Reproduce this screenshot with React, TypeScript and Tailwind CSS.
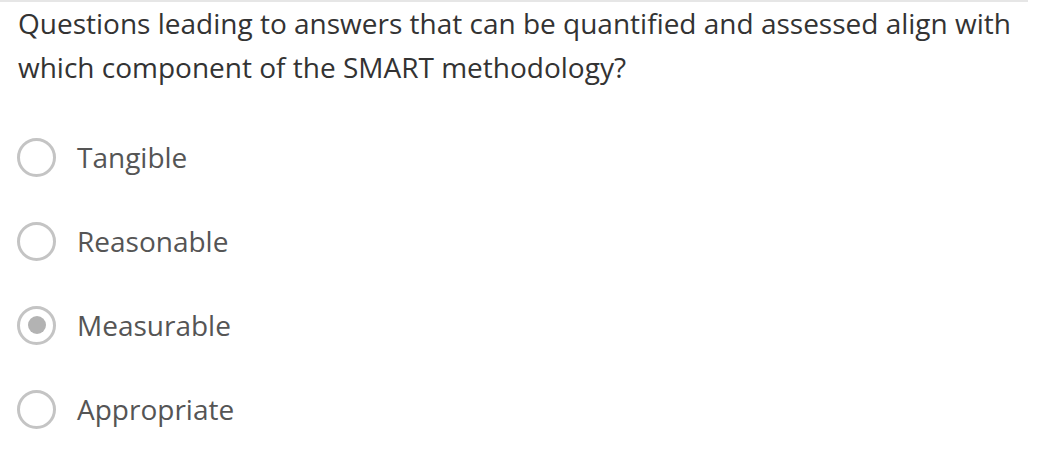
import { useState } from 'react';

const options = ['Tangible', 'Reasonable', 'Measurable', 'Appropriate'];

export default function App() {
  const [selected, setSelected] = useState('Measurable');

  return (
    <div className="w-[1038px] h-[464px] bg-white font-['Open_Sans',sans-serif]">
      <div className="mr-[10px] border-t-2 border-[#e6e6e6] pl-[18px]">
        <p className="-mt-[1px] text-[28px] leading-[44px] text-[#333333]">
          Questions leading to answers that can be quantified and assessed align with
          <br />
          which component of the SMART methodology?
        </p>
      </div>

      {/* Options */}
      <div className="mt-[26px] flex flex-col">
        {options.map((opt) => (
          <label
            key={opt}
            onClick={() => setSelected(opt)}
            className="flex h-[84px] items-center pl-[17px] cursor-pointer"
          >
            <span className="flex h-[39px] w-[39px] items-center justify-center rounded-full border-[3px] border-[#c4c4c4]">
              {selected === opt && <span className="h-[18px] w-[18px] rounded-full bg-[#b3b3b3]" />}
            </span>
            <span className="ml-[21px] text-[28px] text-[#555555]">{opt}</span>
          </label>
        ))}
      </div>
    </div>
  );
}
